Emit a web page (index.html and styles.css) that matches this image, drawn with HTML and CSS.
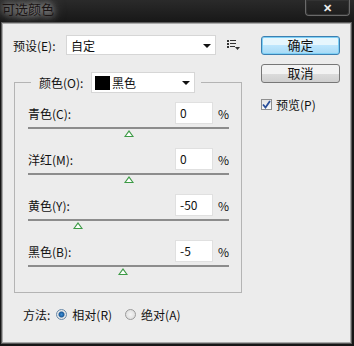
FILE: index.html
```html
<!DOCTYPE html>
<html lang="zh-CN">
<head>
    <meta charset="UTF-8">
    <title>可选颜色</title>
    <link rel="stylesheet" href="styles.css">
</head>
<body>
    <div class="window">
        <div class="titlebar">
            <span class="title">可选颜色</span>
            <span class="close">&#x2715;</span>
        </div>
        <div class="dialog">
            <div class="main">
                <div class="left">
                    <div class="preset-row">
                        <span class="label">预设(E):</span>
                        <div class="select preset-select">
                            <span>自定</span>
                            <span class="arrow"></span>
                        </div>
                        <svg class="menu-icon" width="14" height="11" viewBox="0 0 14 11">
                            <rect x="0" y="0" width="2" height="2" fill="#333"/>
                            <rect x="3" y="0" width="6" height="1" fill="#333"/>
                            <rect x="0" y="3" width="2" height="2" fill="#333"/>
                            <rect x="3" y="3" width="6" height="1" fill="#333"/>
                            <rect x="0" y="6" width="2" height="2" fill="#333"/>
                            <rect x="3" y="6" width="5" height="1" fill="#333"/>
                            <path d="M8 7 L13 7 L10.5 10 Z" fill="#333"/>
                        </svg>
                    </div>

                    <fieldset class="group">
                        <legend>
                            <span class="label">颜色(O):</span>
                            <div class="select color-select">
                                <span class="swatch"></span>
                                <span class="color-name">黑色</span>
                                <span class="arrow"></span>
                            </div>
                        </legend>

                        <div class="channel">
                            <div class="channel-top">
                                <span class="label">青色(C):</span>
                                <span class="value">0</span>
                                <span class="pct">%</span>
                            </div>
                            <div class="track"><span class="thumb" style="left: 50%"></span></div>
                        </div>
                        <div class="channel">
                            <div class="channel-top">
                                <span class="label">洋红(M):</span>
                                <span class="value">0</span>
                                <span class="pct">%</span>
                            </div>
                            <div class="track"><span class="thumb" style="left: 50%"></span></div>
                        </div>
                        <div class="channel">
                            <div class="channel-top">
                                <span class="label">黄色(Y):</span>
                                <span class="value">-50</span>
                                <span class="pct">%</span>
                            </div>
                            <div class="track"><span class="thumb" style="left: 25%"></span></div>
                        </div>
                        <div class="channel">
                            <div class="channel-top">
                                <span class="label">黑色(B):</span>
                                <span class="value">-5</span>
                                <span class="pct">%</span>
                            </div>
                            <div class="track"><span class="thumb" style="left: 47.5%"></span></div>
                        </div>
                    </fieldset>

                    <div class="method-row">
                        <span class="label">方法:</span>
                        <span class="radio checked"></span>
                        <span class="label">相对(R)</span>
                        <span class="radio"></span>
                        <span class="label">绝对(A)</span>
                    </div>
                </div>

                <div class="right">
                    <div class="btn btn-default">确定</div>
                    <div class="btn">取消</div>
                    <div class="check-row">
                        <span class="checkbox">
                            <svg width="9" height="9" viewBox="0 0 9 9"><path d="M1 4.5 L3.5 7.5 L8 1" fill="none" stroke="#2a4f9a" stroke-width="1.8"/></svg>
                        </span>
                        <span class="label">预览(P)</span>
                    </div>
                </div>
            </div>
        </div>
    </div>
</body>
</html>
```

FILE: styles.css
```css
body {
    margin: 0;
    background-color: #1c1c1c;
    font-family: "Noto Sans CJK SC", "Noto Sans", sans-serif;
    font-size: 12px;
    color: #111;
}

.window {
    width: 354px;
    height: 346px;
    display: flex;
    flex-direction: column;
    background: linear-gradient(#2a2a2a, #161616 24px, #161616);
}

.titlebar {
    height: 22px;
    display: flex;
    justify-content: space-between;
    align-items: flex-start;
    padding: 0 2px;
}

.title {
    line-height: 17px;
    font-size: 13px;
    color: #1a1414;
    text-shadow: 0 0 6px #aaa, 0 0 10px #888, 0 0 14px #777;
}

.close {
    width: 43px;
    height: 15px;
    border: 1px solid #6a6a6a;
    border-top: none;
    border-radius: 0 0 4px 4px;
    color: #eee;
    font-size: 11px;
    font-weight: bold;
    text-align: center;
    line-height: 15px;
    margin-right: 2px;
    box-shadow: inset 0 0 0 1px #333;
}

.dialog {
    flex: 1;
    margin: 0 2px 2px 1px;
    background-color: #ececec;
    border: 1px solid #5a5a5a;
    box-shadow: inset 0 0 0 1px #aaa;
}

.main {
    display: flex;
    padding: 12px 0 0 11px;
}

.left {
    width: 230px;
}

.label {
    white-space: nowrap;
}

.preset-row {
    display: flex;
    align-items: center;
    height: 20px;
}

.preset-row .label {
    width: 53px;
}

.select {
    background-color: #fff;
    border: 1px solid #d6d6d6;
    display: flex;
    align-items: center;
    position: relative;
    box-sizing: border-box;
}

.preset-select {
    width: 150px;
    height: 20px;
    padding-left: 4px;
}

.arrow {
    position: absolute;
    right: 4px;
    top: 8px;
    border-left: 4px solid transparent;
    border-right: 4px solid transparent;
    border-top: 4px solid #111;
}

.menu-icon {
    margin-left: 11px;
}

.group {
    margin: 17px 0 0 1px;
    padding: 0 12px 6px 13px;
    width: 228px;
    box-sizing: border-box;
    border: 1px solid #b4b4b4;
    border-radius: 0;
}

.group legend {
    display: flex;
    align-items: center;
    padding: 0 6px 0 8px;
    margin-left: 3px;
}

.group legend .label {
    width: 52px;
}

.color-select {
    width: 104px;
    height: 21px;
    padding-left: 3px;
}

.swatch {
    width: 15px;
    height: 14px;
    background-color: #000;
    margin-right: 2px;
}

.channel {
    padding-bottom: 19px;
}

.channel:first-of-type {
    margin-top: 9px;
}

.channel-top {
    display: flex;
    align-items: center;
    height: 22px;
}

.channel-top .label {
    flex: 1;
}

.value {
    width: 38px;
    height: 22px;
    box-sizing: border-box;
    background-color: #fff;
    border: 1px solid #e0e0e0;
    padding-left: 4px;
    line-height: 20px;
}

.pct {
    width: 16px;
    text-align: right;
}

.track {
    position: relative;
    height: 2px;
    margin-top: 3px;
    background-color: #8c8c8c;
}

.thumb {
    position: absolute;
    top: 3px;
    width: 0;
    height: 0;
}

.thumb::before {
    content: "";
    position: absolute;
    left: -5px;
    top: 0;
    border-left: 5px solid transparent;
    border-right: 5px solid transparent;
    border-bottom: 7px solid #3c9a45;
}

.thumb::after {
    content: "";
    position: absolute;
    left: -3px;
    top: 2px;
    border-left: 3px solid transparent;
    border-right: 3px solid transparent;
    border-bottom: 4px solid #fff;
}

.method-row {
    display: flex;
    align-items: center;
    margin-top: 12px;
    margin-left: 10px;
    height: 18px;
}

.method-row .label:first-child {
    margin-right: 6px;
}

.radio {
    width: 11px;
    height: 11px;
    box-sizing: border-box;
    border-radius: 50%;
    border: 1px solid #9a9a9a;
    background: radial-gradient(circle, #f4f4f4, #d8d8d8);
    margin-right: 5px;
}

.radio.checked {
    background: radial-gradient(circle, #3d8fd6 0, #1a5a9a 2.5px, #e8e8e8 3.5px, #d8d8d8);
    border-color: #6a8aa8;
}

.radio + .label {
    margin-right: 13px;
}

.right {
    margin-left: 18px;
    padding-top: 1px;
    display: flex;
    flex-direction: column;
}

.btn {
    width: 79px;
    height: 19px;
    box-sizing: border-box;
    border: 1px solid #777;
    border-radius: 3px;
    background: linear-gradient(#f2f2f2 50%, #dcdcdc 50%, #cfcfcf);
    text-align: center;
    line-height: 16px;
    font-size: 13px;
    margin-bottom: 9px;
}

.btn-default {
    border-color: #3c7fb1;
    background: linear-gradient(#e6f6fd 50%, #bde6fd 50%, #a7d9f5);
    box-shadow: inset 0 0 0 1px #7fd0f5;
}

.check-row {
    display: flex;
    align-items: center;
    margin-top: 4px;
}

.checkbox {
    width: 11px;
    height: 11px;
    box-sizing: border-box;
    border: 1px solid #8f8f8f;
    background: linear-gradient(#e4e4e4, #fafafa);
    display: flex;
    align-items: center;
    justify-content: center;
    margin-right: 4px;
}
```
